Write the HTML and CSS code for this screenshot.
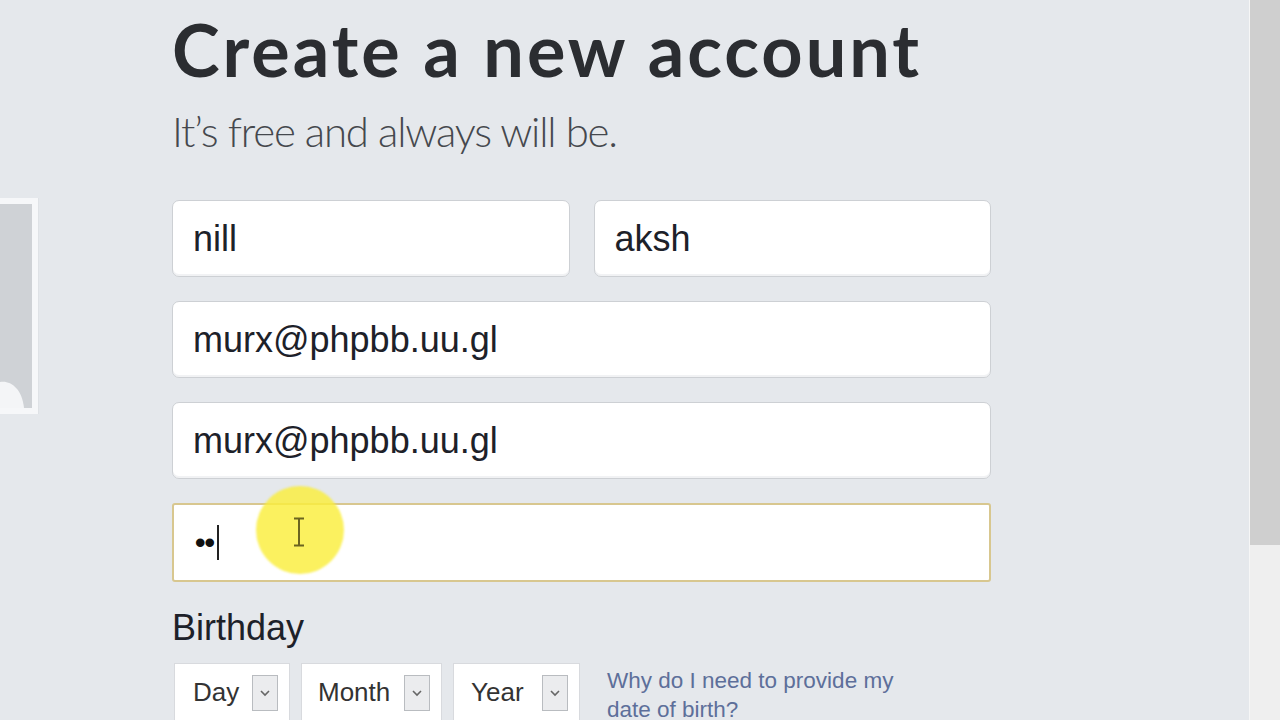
FILE: index.html
```html
<!DOCTYPE html>
<html lang="en">
<head>
<meta charset="utf-8">
<title>Create a new account</title>
<link rel="stylesheet" href="styles.css">
</head>
<body>
<div class="screen">
  <div class="page">
    <aside class="side">
      <div class="avatar">
        <svg width="32" height="204" viewBox="0 0 32 204">
          <rect x="0" y="0" width="32" height="204" fill="#cfd2d6"/>
          <path d="M0 178 C10 176 22 184 24 204 L0 204 Z" fill="#f4f5f7"/>
        </svg>
      </div>
    </aside>
    <main class="form">
      <h1 class="title">Create a new account</h1>
      <p class="subtitle">It’s free and always will be.</p>
      <div class="fields">
        <div class="row">
          <div class="field">nill</div>
          <div class="field">aksh</div>
        </div>
        <div class="field">murx@phpbb.uu.gl</div>
        <div class="field">murx@phpbb.uu.gl</div>
        <div class="field field-focus">
          <span class="dots">••</span><span class="caret"></span>
          <span class="highlight"></span>
          <svg class="ibeam" width="14" height="30" viewBox="0 0 14 30">
            <path d="M2 1.5 H12 M7 1.5 V28.5 M2 28.5 H12" stroke="#6b6420" stroke-width="2" fill="none"/>
          </svg>
        </div>
      </div>
      <div class="birthday-label">Birthday</div>
      <div class="birthday">
        <div class="select sel-day"><span>Day</span><span class="drop"><svg width="12" height="8" viewBox="0 0 12 8"><path d="M2 2 L6 6 L10 2" stroke="#666" stroke-width="1.6" fill="none"/></svg></span></div>
        <div class="select sel-month"><span>Month</span><span class="drop"><svg width="12" height="8" viewBox="0 0 12 8"><path d="M2 2 L6 6 L10 2" stroke="#666" stroke-width="1.6" fill="none"/></svg></span></div>
        <div class="select sel-year"><span>Year</span><span class="drop"><svg width="12" height="8" viewBox="0 0 12 8"><path d="M2 2 L6 6 L10 2" stroke="#666" stroke-width="1.6" fill="none"/></svg></span></div>
        <a class="why" href="#">Why do I need to provide my date of birth?</a>
      </div>
    </main>
  </div>
  <div class="scrollbar"><div class="thumb"></div></div>
</div>
</body>
</html>
```
FILE: styles.css
```css
html, body {
  margin: 0;
  padding: 0;
  height: 100%;
  overflow: hidden;
}
body {
  background: #e5e8ec;
  font-family: "Liberation Sans", Arial, sans-serif;
  color: #1d2129;
}
.screen {
  display: flex;
  width: 1280px;
  height: 720px;
}
.page {
  flex: 1;
  display: flex;
  align-items: flex-start;
}
.side {
  width: 38px;
  padding-top: 198px;
}
.avatar {
  width: 32px;
  height: 204px;
  border: 6px solid #f6f7f9;
  border-left: none;
  box-shadow: 1px 0 0 #dfe2e6;
}
.avatar svg { display: block; }
.form {
  margin-left: 134px;
  width: 819px;
}
.title {
  margin: 13px 0 0;
  font-family: Lato, "Open Sans", sans-serif;
  font-weight: 700;
  font-size: 72px;
  line-height: 72px;
  color: #2b2d31;
  letter-spacing: 3px;
  white-space: nowrap;
}
.subtitle {
  margin: 25px 0 0;
  font-family: Lato, sans-serif;
  font-weight: 300;
  font-size: 42px;
  line-height: 42px;
  color: #45484e;
  letter-spacing: -1.2px;
  white-space: nowrap;
}
.fields {
  margin-top: 48px;
  display: flex;
  flex-direction: column;
  gap: 24px;
}
.row {
  display: flex;
  gap: 24px;
}
.row .field { flex: 1; }
.field {
  position: relative;
  height: 77px;
  box-sizing: border-box;
  background: #fff;
  border: 1px solid #cdd0d4;
  border-radius: 7px;
  padding-left: 20px;
  display: flex;
  align-items: center;
  font-size: 36px;
  color: #1d2129;
  box-shadow: inset 0 -2px 0 #f1f2f4;
}
.field-focus {
  height: 79px;
  border: 2px solid #d8c78f;
  border-radius: 3px;
  padding-left: 21px;
  box-shadow: none;
}
.dots {
  font-size: 30px;
  letter-spacing: -1px;
  font-weight: 700;
  color: #111;
}
.caret {
  display: inline-block;
  width: 2px;
  height: 35px;
  margin-left: 3px;
  background: #222;
}
.highlight {
  position: absolute;
  left: 82px;
  top: -19px;
  width: 88px;
  height: 88px;
  border-radius: 50%;
  background: rgba(250, 238, 60, 0.82);
  filter: blur(1px);
}
.ibeam {
  position: absolute;
  left: 118px;
  top: 12px;
}
.birthday-label {
  margin-top: 26px;
  font-size: 36px;
  line-height: 40px;
  color: #1d2129;
}
.birthday {
  margin-top: 15px;
  display: flex;
  align-items: flex-start;
  padding-left: 2px;
}
.select {
  height: 62px;
  box-sizing: border-box;
  background: #fff;
  border: 1px solid #d8dade;
  border-bottom: none;
  display: flex;
  align-items: center;
  justify-content: space-between;
  padding: 0 11px 4px 18px;
  font-size: 26px;
  color: #333;
  margin-right: 11px;
}
.sel-day { width: 116px; }
.sel-month { width: 141px; padding-left: 16px; }
.sel-year { width: 127px; padding-left: 17px; margin-right: 27px; }
.drop {
  width: 26px;
  height: 36px;
  box-sizing: border-box;
  border: 1px solid #b9bcc0;
  background: #ebecee;
  display: flex;
  align-items: center;
  justify-content: center;
}
.drop svg { display: block; }
.why {
  margin-top: 3px;
  width: 310px;
  font-size: 22.5px;
  line-height: 29px;
  color: #5d6f9a;
  text-decoration: none;
}
.scrollbar {
  width: 30px;
  height: 720px;
  background: #efefef;
  border-left: 1px solid #f6f6f6;
}
.thumb {
  height: 545px;
  background: #cfcfcf;
}
```
